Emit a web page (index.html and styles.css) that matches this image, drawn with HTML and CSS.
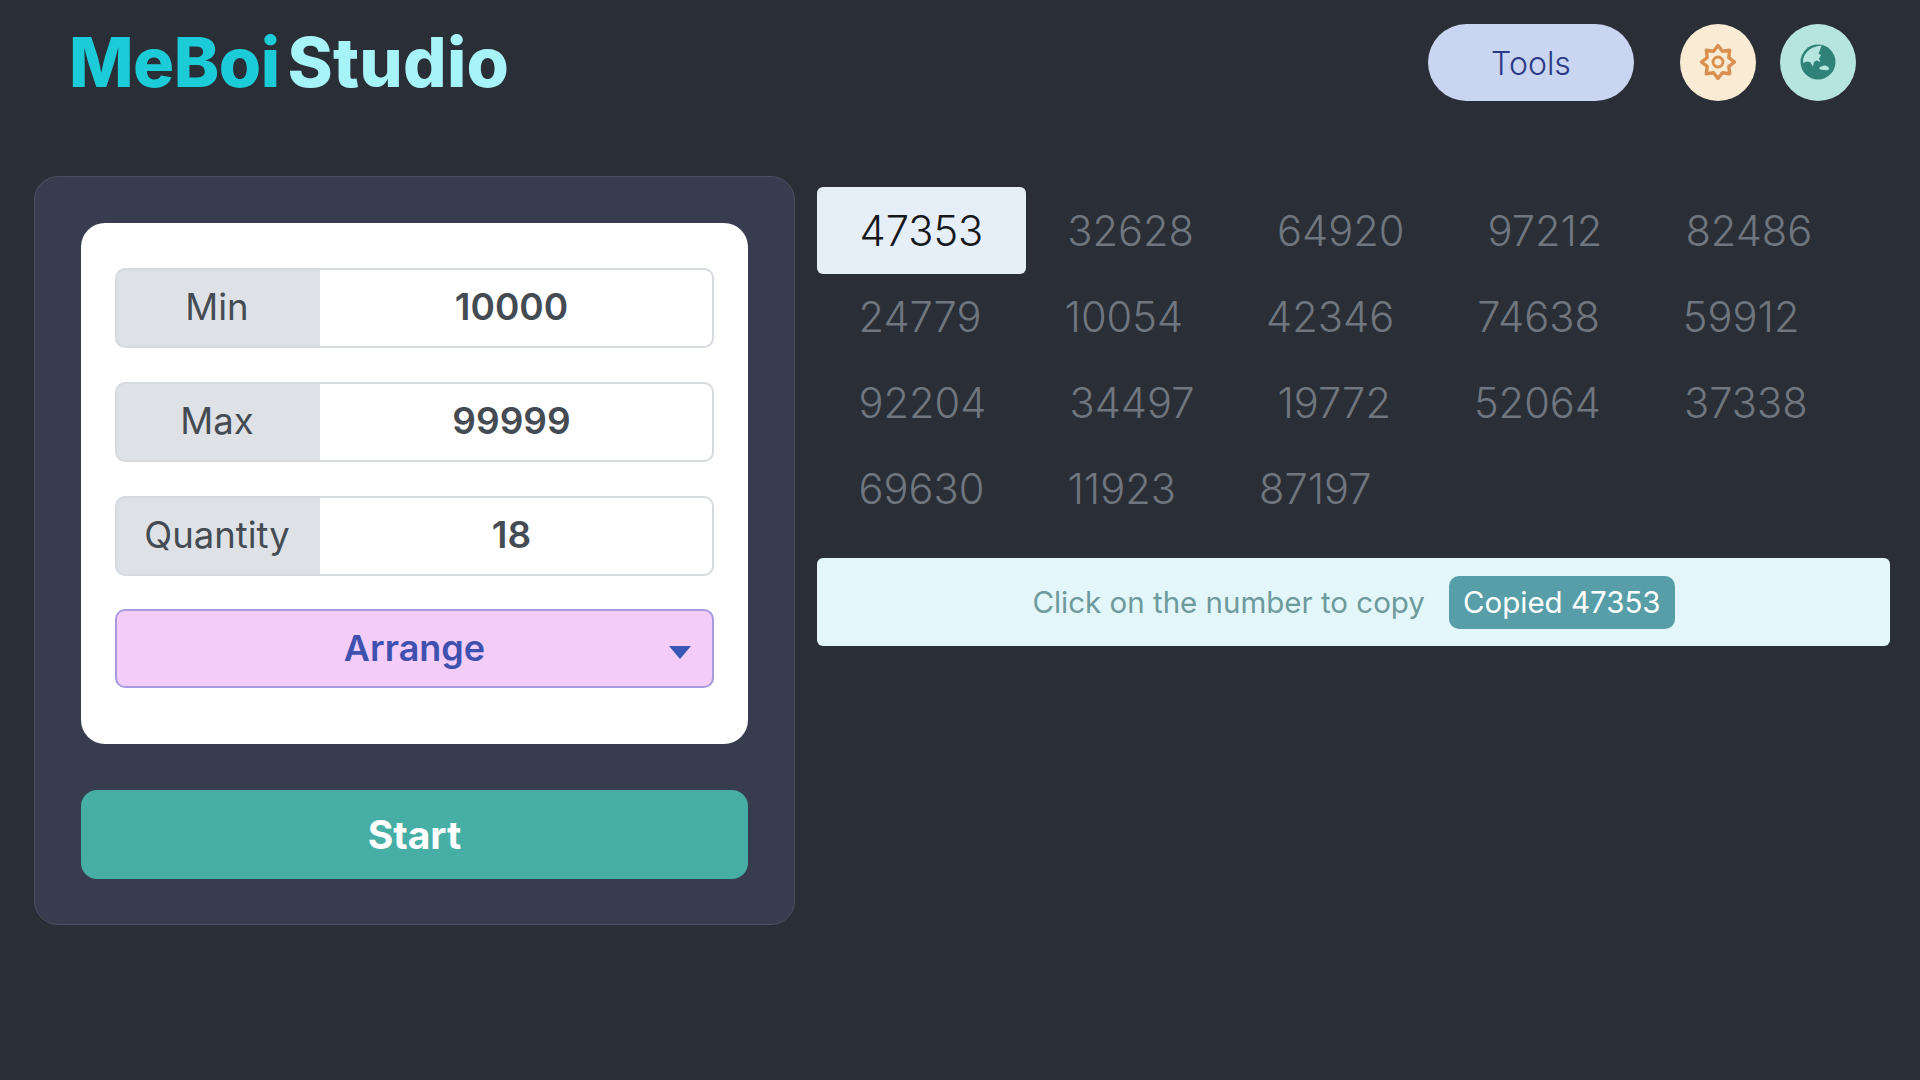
FILE: index.html
```html
<!DOCTYPE html>
<html lang="en">
<head>
    <meta charset="UTF-8">
    <meta name="viewport" content="width=device-width, initial-scale=1.0">
    <title>MeBoi Studio - Random Number</title>
    <link rel="stylesheet" href="styles.css">
</head>
<body>
    <header class="topbar">
        <div class="logo"><span class="logo-first">MeBoi</span><span class="logo-second">Studio</span></div>
        <div class="top-actions">
            <button class="tools-btn">Tools</button>
            <button class="round-btn settings-btn" aria-label="Settings">
                <svg width="38" height="38" viewBox="-19 -19 38 38" fill="none" stroke="#d98f4f" stroke-linejoin="round">
                    <path stroke-width="3.4" d="M0 -16.5L4.4 -10.8L11.7 -11.7L10.8 -4.4L16.5 0L10.8 4.4L11.7 11.7L4.4 10.8L0 16.5L-4.4 10.8L-11.7 11.7L-10.8 4.4L-16.5 0L-10.8 -4.4L-11.7 -11.7L-4.4 -10.8Z"/>
                    <circle r="5" stroke-width="2.8"/>
                </svg>
            </button>
            <button class="round-btn lang-btn" aria-label="Language">
                <svg width="36" height="36" viewBox="0 0 36 36">
                    <circle cx="18" cy="18" r="17.5" fill="#2f8277"/>
                    <path fill="#b6e4df" d="M3.2 19C2 11 9 2.5 21.5 1.5L20 6L18.5 9.5L21 11L19 14.5L20.5 18L16.5 16.5L14 18L13 22.5L10 18L6.5 17.5Z"/>
                    <path fill="#b6e4df" d="M19 24C19.5 22.5 21.5 22.5 23 22C25 21 28 22 29 24C29.5 26 27 26.5 25 26C23 26 20 26 19 24Z"/>
                </svg>
            </button>
        </div>
    </header>

    <main class="content">
        <section class="panel">
            <div class="form-card">
                <div class="field">
                    <span class="field-label">Min</span>
                    <span class="field-value">10000</span>
                </div>
                <div class="field">
                    <span class="field-label">Max</span>
                    <span class="field-value">99999</span>
                </div>
                <div class="field">
                    <span class="field-label">Quantity</span>
                    <span class="field-value">18</span>
                </div>
                <div class="arrange">
                    <span>Arrange</span>
                    <i class="caret"></i>
                </div>
            </div>
            <button class="start-btn">Start</button>
        </section>

        <section class="results">
            <div class="numbers">
                <span class="num active">47353</span>
                <span class="num">32628</span>
                <span class="num">64920</span>
                <span class="num">97212</span>
                <span class="num">82486</span>
                <span class="num">24779</span>
                <span class="num">10054</span>
                <span class="num">42346</span>
                <span class="num">74638</span>
                <span class="num">59912</span>
                <span class="num">92204</span>
                <span class="num">34497</span>
                <span class="num">19772</span>
                <span class="num">52064</span>
                <span class="num">37338</span>
                <span class="num">69630</span>
                <span class="num">11923</span>
                <span class="num">87197</span>
            </div>
            <div class="hint">
                <span class="hint-text">Click on the number to copy</span>
                <span class="copied">Copied 47353</span>
            </div>
        </section>
    </main>
</body>
</html>
```

FILE: styles.css
```css
* {
    box-sizing: border-box;
}

body {
    margin: 0;
    height: 1080px;
    overflow: hidden;
    background: #2a2e36;
    font-family: Inter, "Noto Sans", sans-serif;
}

button {
    font-family: inherit;
    border: none;
    cursor: pointer;
}

.topbar {
    display: flex;
    justify-content: space-between;
    align-items: center;
    height: 176px;
    padding: 0 64px 52px 69px;
}

.logo {
    display: flex;
    gap: 8px;
    font-size: 68.5px;
    font-weight: 800;
    letter-spacing: -0.5px;
}

.logo-first {
    color: #1ccbd8;
}

.logo-second {
    color: #a6f3f8;
    letter-spacing: 0.2px;
}

.top-actions {
    display: flex;
    align-items: center;
}

.tools-btn {
    width: 206px;
    height: 77px;
    margin-right: 46px;
    padding-top: 4px;
    border-radius: 40px;
    background: #c9d5f1;
    color: #2c3a85;
    font-size: 32px;
    font-weight: 300;
}

.round-btn {
    display: flex;
    justify-content: center;
    align-items: center;
    width: 76px;
    height: 77px;
    padding: 0;
    border-radius: 50%;
}

.settings-btn {
    margin-right: 24px;
    background: #faecd4;
}

.lang-btn {
    background: #b6e4df;
}

.content {
    display: flex;
    align-items: flex-start;
    gap: 22px;
    padding: 0 30px 0 34px;
}

.panel {
    flex: none;
    width: 761px;
    height: 749px;
    padding: 46px 46px 0;
    background: #373d4f;
    border: 1px solid #4b5162;
    border-radius: 24px;
}

.form-card {
    height: 521px;
    padding: 45px 34px 0;
    background: #fff;
    border-radius: 24px;
}

.field {
    display: flex;
    height: 80px;
    margin-bottom: 34px;
    line-height: 74px;
    font-size: 36px;
    color: #444b52;
}

.field-label {
    display: flex;
    justify-content: center;
    width: 205px;
    padding-right: 3px;
    font-size: 36.5px;
    background: #dee2e6;
    border: 2px solid #d6dade;
    border-right: none;
    border-radius: 10px 0 0 10px;
}

.field-value {
    flex: 1;
    display: flex;
    justify-content: center;
    padding-right: 9px;
    font-size: 37px;
    font-weight: 600;
    border: 2px solid #d6dade;
    border-left: none;
    border-radius: 0 10px 10px 0;
}

.arrange {
    display: flex;
    justify-content: center;
    align-items: center;
    position: relative;
    height: 79px;
    margin-top: -1px;
    padding-bottom: 2px;
    background: #f3cdf8;
    border: 2px solid #a79be0;
    border-radius: 10px;
    color: #3f51ae;
    font-size: 36px;
    font-weight: 600;
}

.caret {
    position: absolute;
    right: 21px;
    top: 35px;
    border-left: 11px solid transparent;
    border-right: 11px solid transparent;
    border-top: 13px solid #3a56b4;
}

.start-btn {
    display: block;
    width: 100%;
    height: 89px;
    margin-top: 46px;
    padding-bottom: 2px;
    background: #46aea5;
    border-radius: 16px;
    color: #fff;
    font-size: 39px;
    font-weight: 700;
}

.results {
    flex: 1;
    padding-top: 11px;
}

.numbers {
    display: flex;
    flex-wrap: wrap;
    margin-bottom: 27px;
}

.num {
    display: flex;
    align-items: center;
    height: 87px;
    margin-bottom: -1px;
    padding: 0 41.5px;
    border-radius: 6px;
    color: #6f767f;
    font-size: 41.6px;
    font-weight: 300;
}

.num.active {
    padding: 0 42.5px;
    background: #e6eef8;
    color: #16181c;
}

.hint {
    display: flex;
    justify-content: center;
    align-items: center;
    gap: 24px;
    height: 88px;
    background: #e3f6f9;
    border-radius: 6px;
    color: #6d9a9c;
    font-size: 29.5px;
}

.copied {
    display: flex;
    align-items: center;
    height: 53px;
    padding: 0 14px;
    background: #589ea9;
    border-radius: 10px;
    color: #fff;
}
```
